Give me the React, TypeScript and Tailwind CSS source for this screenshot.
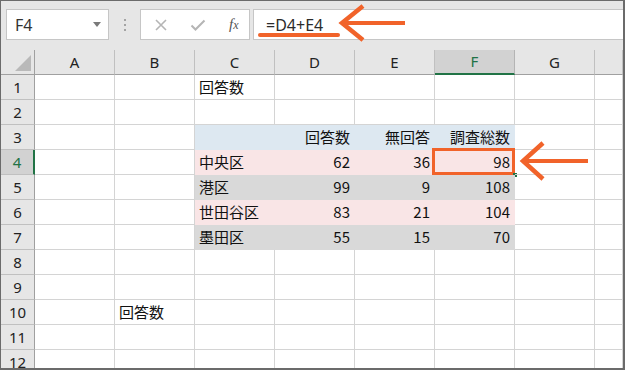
import React from "react";

const COLS = ["A", "B", "C", "D", "E", "F", "G", ""];

type Cell = { text?: string; align?: "l" | "r"; fill?: string };

const BLUE = "#dde8f1";
const PINK = "#f9e5e6";
const GRAY = "#d9d9d9";

// rows 1..12, columns A..G + partial H
function sheetRow(r: number): Cell[] {
  const row: Cell[] = COLS.map(() => ({}));
  const put = (c: number, text: string, align: "l" | "r", fill?: string) => {
    row[c] = { text, align, fill };
  };
  const table: Record<number, [string, string, string, string, string]> = {
    3: ["", "回答数", "無回答", "調査総数", BLUE],
    4: ["中央区", "62", "36", "98", PINK],
    5: ["港区", "99", "9", "108", GRAY],
    6: ["世田谷区", "83", "21", "104", PINK],
    7: ["墨田区", "55", "15", "70", GRAY],
  };
  if (r === 1) put(2, "回答数", "l");
  if (r === 10) put(1, "回答数", "l");
  const t = table[r];
  if (t) {
    put(2, t[0], "l", t[4]);
    put(3, t[1], "r", t[4]);
    put(4, t[2], "r", t[4]);
    put(5, t[3], "r", t[4]);
  }
  return row;
}

const font = { fontFamily: '"Noto Sans CJK JP", "Noto Sans", sans-serif' };
const uiFont = { fontFamily: '"Noto Sans", "Open Sans", sans-serif' };

export default function App() {
  const rows = Array.from({ length: 12 }, (_, i) => i + 1);

  return (
    <div className="relative w-[625px] h-[370px] overflow-hidden bg-white border-t border-l border-r-2 border-b-2 border-[#6b6b6b]">
      {/* formula bar */}
      <div className="h-[49px] bg-[#e6e6e6] flex items-start pt-[8px] pl-[5px]">
        <div className="w-[103px] h-[31px] bg-white border border-[#c6c6c6] flex items-center justify-between pl-[8px] pr-[7px]">
          <span className="text-[16px] text-[#333] leading-none" style={uiFont}>F4</span>
          <span className="w-0 h-0 border-l-[4px] border-r-[4px] border-t-[5px] border-l-transparent border-r-transparent border-t-[#7a7a7a]" />
        </div>
        <div className="w-[31px] h-[31px] flex flex-col items-center justify-center gap-[3px]">
          <span className="w-[2px] h-[2px] bg-[#a3a3a3]" />
          <span className="w-[2px] h-[2px] bg-[#a3a3a3]" />
          <span className="w-[2px] h-[2px] bg-[#a3a3a3]" />
        </div>
        <div className="w-[110px] h-[31px] bg-white border border-[#c6c6c6] flex items-center pl-[11px]">
          <svg width="14" height="14" viewBox="0 0 14 14" className="ml-[2px]">
            <path d="M2 2 L12 12 M12 2 L2 12" stroke="#b5b5b5" strokeWidth="1.6" fill="none" />
          </svg>
          <svg width="16" height="14" viewBox="0 0 16 14" className="ml-[22px]">
            <path d="M1.5 7.5 L5.5 11.5 L14.5 2.5" stroke="#b5b5b5" strokeWidth="2" fill="none" />
          </svg>
          <span className="ml-[23px] text-[15px] italic text-[#555] leading-none" style={{ fontFamily: '"Liberation Serif", serif' }}>
            f<span className="text-[12px]">x</span>
          </span>
        </div>
        <div className="ml-[3px] flex-1 h-[31px] bg-white border border-r-0 border-[#c6c6c6] flex items-center pl-[12px]">
          <span className="text-[16px] text-[#2b2b2b] leading-none" style={uiFont}>=D4+E4</span>
        </div>
      </div>

      {/* sheet */}
      <div className="grid grid-cols-[34px_repeat(7,80px)_1fr]" style={font}>
        {/* header row */}
        <div className="relative h-[25px] bg-[#e6e6e6] border-r border-b border-[#a0a0a0]">
          <svg className="absolute left-0 top-0" width="34" height="25" viewBox="0 0 34 25">
            <polygon points="30,5 30,21 14,21" fill="#b9b9b9" />
          </svg>
        </div>
        {COLS.map((c, i) => (
          <div
            key={"h" + i}
            className={
              c === "F"
                ? "h-[25px] bg-[#d2d2d2] border-r border-[#b4b4b4] border-b-2 border-b-[#217346] flex items-center justify-center text-[15px] text-[#217346]"
                : "h-[25px] bg-[#e6e6e6] border-r border-[#c0c0c0] border-b border-b-[#a0a0a0] flex items-center justify-center text-[15px] text-[#222]"
            }
            style={uiFont}
          >
            {c}
          </div>
        ))}

        {rows.map((r) => (
          <React.Fragment key={r}>
            <div
              className={
                r === 4
                  ? "h-[25px] bg-[#d2d2d2] border-r-2 border-r-[#217346] border-b border-b-[#c0c0c0] flex items-center justify-center text-[15px] text-[#217346]"
                  : "h-[25px] bg-[#e6e6e6] border-r border-r-[#a0a0a0] border-b border-b-[#c0c0c0] flex items-center justify-center text-[15px] text-[#222]"
              }
              style={uiFont}
            >
              {r}
            </div>
            {sheetRow(r).map((cell, ci) => {
              const selected = r === 4 && ci === 5;
              return (
                <div
                  key={ci}
                  className={
                    "relative h-[25px] border-r border-b flex items-center px-[4px] text-[15px] text-[#111] whitespace-nowrap " +
                    (cell.align === "r" ? "justify-end " : "justify-start ") +
                    (cell.fill ? "" : "border-[#d4d4d4]")
                  }
                  style={cell.fill ? { backgroundColor: cell.fill, borderColor: cell.fill } : undefined}
                >
                  {cell.text}
                  {selected && (
                    <>
                      <div className="absolute left-[-3px] top-[-2px] right-[-1px] bottom-[-1px] border-[3px] border-[#f1632a]" />
                      <div className="absolute right-[-3px] bottom-[-3px] w-[4px] h-[4px] bg-[#217346]" />
                    </>
                  )}
                </div>
              );
            })}
          </React.Fragment>
        ))}
      </div>

      {/* annotation arrows */}
      <svg className="absolute left-0 top-0 pointer-events-none" width="625" height="370" viewBox="0 0 625 370">
        <line x1="259" y1="34" x2="337" y2="34" stroke="#f1632a" strokeWidth="4" strokeLinecap="round" />
        <line x1="342" y1="22" x2="404" y2="22" stroke="#f1632a" strokeWidth="4" />
        <polyline points="362,5 341,22 362,39" stroke="#f1632a" strokeWidth="4.5" fill="none" />
        <line x1="524" y1="160" x2="587" y2="160" stroke="#f1632a" strokeWidth="4" />
        <polyline points="542,142 522,160 542,178" stroke="#f1632a" strokeWidth="4.5" fill="none" />
      </svg>
    </div>
  );
}
